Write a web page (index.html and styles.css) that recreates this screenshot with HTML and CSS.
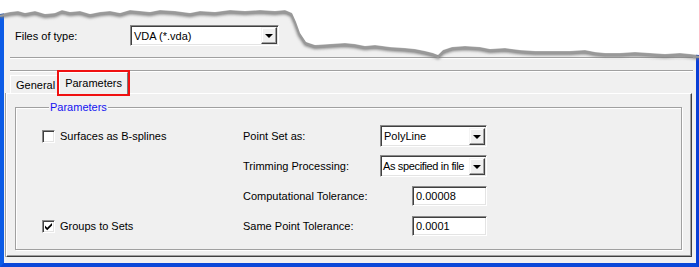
FILE: index.html
```html
<!DOCTYPE html>
<html lang="en">
<head>
  <meta charset="UTF-8">
  <title>Import Options</title>
  <link rel="stylesheet" href="styles.css">
</head>
<body>

  <div class="window">
    <div class="file-row">
      <span class="file-label">Files of type:</span>
      <div class="combo combo-type">
        <span class="combo-text">VDA (*.vda)</span>
        <span class="drop"><i></i></span>
      </div>
    </div>
    <div class="rule rule-first"></div>
    <div class="rule rule-second"></div>

    <div class="tabs">
      <div class="tab">General</div>
      <div class="tab active">Parameters</div>
    </div>

    <div class="panel">
      <fieldset class="group">
        <legend>Parameters</legend>
        <div class="grid">
          <label class="check"><span class="box"></span>Surfaces as B-splines</label>
          <span class="field-label">Point Set as:</span>
          <div class="combo combo-small">
            <span class="combo-text">PolyLine</span>
            <span class="drop"><i></i></span>
          </div>

          <span></span>
          <span class="field-label">Trimming Processing:</span>
          <div class="combo combo-small">
            <span class="combo-text tight">As specified in file</span>
            <span class="drop"><i></i></span>
          </div>

          <span></span>
          <span class="field-label">Computational Tolerance:</span>
          <div class="edit">0.00008</div>

          <label class="check"><span class="box checked">
            <svg width="9" height="9" viewBox="0 0 9 9"><path d="M1 3.5 L3.2 5.7 L8 1 L8 3.6 L3.2 8.3 L1 6.1 Z" fill="#000"/></svg>
          </span>Groups to Sets</label>
          <span class="field-label">Same Point Tolerance:</span>
          <div class="edit">0.0001</div>
        </div>
      </fieldset>
    </div>

    <!-- torn paper edge over the top of the dialog -->
    <svg class="tear" width="699" height="64" viewBox="0 0 699 64">
      <defs>
        <filter id="soft" x="-5%" y="-50%" width="110%" height="200%">
          <feGaussianBlur stdDeviation="1.4"/>
        </filter>
      </defs>
      <path class="tear-shadow" filter="url(#soft)" d="M0,16 L10,14 L18,13 L25,15 L35,13 L45,16 L55,15 L62,12 L70,14 L80,13 L90,16 L100,14 L110,13 L120,15 L130,12 L140,13 L150,14 L160,12 L175,13 L190,15 L200,13 L215,14 L230,12 L245,13 L260,12 L275,13 L285,12 L292,15 L296,24 L300,35 L306,44 L315,47 L330,46 L345,45 L355,46 L365,48 L375,47 L390,49 L405,50 L415,51 L425,53 L433,55 L438,57 L443,52 L452,49 L465,48 L480,49 L490,51 L505,50 L520,52 L535,53 L550,53 L570,53 L585,52 L595,54 L605,55 L620,55 L635,54 L650,55 L665,56 L680,55 L690,56 L699,57"/>
      <path class="tear-line" d="M0,16 L10,14 L18,13 L25,15 L35,13 L45,16 L55,15 L62,12 L70,14 L80,13 L90,16 L100,14 L110,13 L120,15 L130,12 L140,13 L150,14 L160,12 L175,13 L190,15 L200,13 L215,14 L230,12 L245,13 L260,12 L275,13 L285,12 L292,15 L296,24 L300,35 L306,44 L315,47 L330,46 L345,45 L355,46 L365,48 L375,47 L390,49 L405,50 L415,51 L425,53 L433,55 L438,57 L443,52 L452,49 L465,48 L480,49 L490,51 L505,50 L520,52 L535,53 L550,53 L570,53 L585,52 L595,54 L605,55 L620,55 L635,54 L650,55 L665,56 L680,55 L690,56 L699,57"/>
      <path class="tear-paper" d="M0,0 L699,0 L699,55 L690,54 L680,53 L665,54 L650,53 L635,52 L620,53 L605,53 L595,52 L585,50 L570,51 L550,51 L535,51 L520,50 L505,48 L490,49 L480,47 L465,46 L452,47 L443,50 L438,55 L433,53 L425,51 L415,49 L405,48 L390,47 L375,45 L365,46 L355,44 L345,43 L330,44 L315,45 L306,42 L300,33 L296,22 L292,13 L285,10 L275,11 L260,10 L245,11 L230,10 L215,12 L200,11 L190,13 L175,11 L160,10 L150,12 L140,11 L130,10 L120,13 L110,11 L100,12 L90,14 L80,11 L70,12 L62,10 L55,13 L45,14 L35,11 L25,13 L18,11 L10,12 L0,14 Z"/>
    </svg>
  </div>

</body>
</html>
```

FILE: styles.css
```css
body {
  margin: 0;
  background-color: #ffffff;
  font-family: 'Liberation Sans', Arial, sans-serif;
  font-size: 11px;
  color: #000;
}

.window {
  position: relative;
  width: 699px;
  height: 267px;
  box-sizing: border-box;
  background-color: #f0f0f0;
  border-left: 4px solid #0b5be6;
  border-right: 3px solid #0a3fd6;
  border-bottom: 4px solid #0a47d8;
  display: flex;
  flex-direction: column;
}

.file-row {
  display: flex;
  align-items: center;
  height: 21px;
  margin-top: 25px;
  padding-left: 11px;
}

.file-label {
  width: 115px;
}

/* sunken 3d boxes */
.combo, .edit {
  position: relative;
  box-sizing: border-box;
  background-color: #fff;
  border: 1px solid;
  border-color: #8a8a8a #ffffff #ffffff #8a8a8a;
  box-shadow: inset 1px 1px 0 #404040, inset -1px -1px 0 #e4e4e4;
  display: flex;
  align-items: center;
}

.combo-type {
  width: 149px;
  height: 21px;
}

.combo-text {
  flex: 1;
  padding-left: 3px;
  white-space: nowrap;
  overflow: hidden;
}

.combo-text.tight {
  padding-left: 2px;
  letter-spacing: -0.35px;
}

.drop {
  width: 16px;
  height: 17px;
  margin-right: 1px;
  box-sizing: border-box;
  background-color: #f0f0f0;
  border: 1px solid;
  border-color: #f4f4f4 #404040 #404040 #f4f4f4;
  box-shadow: inset -1px -1px 0 #a0a0a0, inset 1px 1px 0 #fff;
  display: flex;
  align-items: center;
  justify-content: center;
}

.drop i {
  width: 0;
  height: 0;
  border-left: 4px solid transparent;
  border-right: 4px solid transparent;
  border-top: 4px solid #000;
  margin-top: 1px;
}

.rule {
  height: 0;
  margin: 0 3px 0 6px;
  border-top: 1px solid #a0a0a0;
  border-bottom: 1px solid #ffffff;
}

.rule-first {
  margin-top: 11px;
}

.rule-second {
  margin-top: 11px;
}

.tabs {
  display: flex;
  align-items: flex-end;
  height: 21px;
  padding-left: 6px;
  position: relative;
  z-index: 1;
}

.tab {
  box-sizing: border-box;
  height: 18px;
  padding: 2px 4px 0 5px;
  border: 1px solid;
  border-color: #ffffff #7a7a7a transparent #ffffff;
  border-bottom: none;
  line-height: 14px;
}

.tab.active {
  height: 22px;
  margin: 0 0 -1px -1px;
  padding: 3px 5px 0 5px;
  background-color: #f0f0f0;
  outline: 2px solid #f01010;
}

.panel {
  flex: 1;
  margin: 0 4px 6px 2px;
  box-sizing: border-box;
  border: 1px solid;
  border-color: #ffffff #404040 #404040 #ffffff;
  box-shadow: inset -1px -1px 0 #a0a0a0, -1px 0 0 #a0a0a0;
  padding: 7px 9px 6px 8px;
  display: flex;
  flex-direction: column;
}

.group {
  flex: 1;
  margin: 0;
  padding: 0 0 0 26px;
  border: 1px solid #a0a0a0;
  box-shadow: 1px 1px 0 #ffffff, inset 1px 1px 0 #ffffff;
}

.group legend {
  margin-left: 7px;
  padding: 0 1px;
  color: #1414f0;
  line-height: 13px;
  background-color: #f0f0f0;
}

.grid {
  display: grid;
  grid-template-columns: 201px 137px 107px;
  grid-auto-rows: 22px;
  row-gap: 8px;
  align-items: center;
  padding-top: 11px;
}

.check {
  display: flex;
  align-items: center;
  gap: 5px;
}

.box {
  width: 13px;
  height: 13px;
  box-sizing: border-box;
  background-color: #fff;
  border: 1px solid;
  border-color: #8a8a8a #ffffff #ffffff #8a8a8a;
  box-shadow: inset 1px 1px 0 #404040, inset -1px -1px 0 #e4e4e4;
  display: flex;
  align-items: center;
  justify-content: center;
}

.combo-small {
  width: 107px;
  height: 22px;
}

.edit {
  justify-self: end;
  width: 75px;
  height: 20px;
  padding-left: 3px;
}

.tear {
  position: absolute;
  top: 0;
  left: -4px;
  z-index: 2;
}

.tear-shadow {
  fill: none;
  stroke: #7a7a7a;
  stroke-width: 4;
}

.tear-line {
  fill: none;
  stroke: #999999;
  stroke-width: 2;
}

.tear-paper {
  fill: #ffffff;
}
```
